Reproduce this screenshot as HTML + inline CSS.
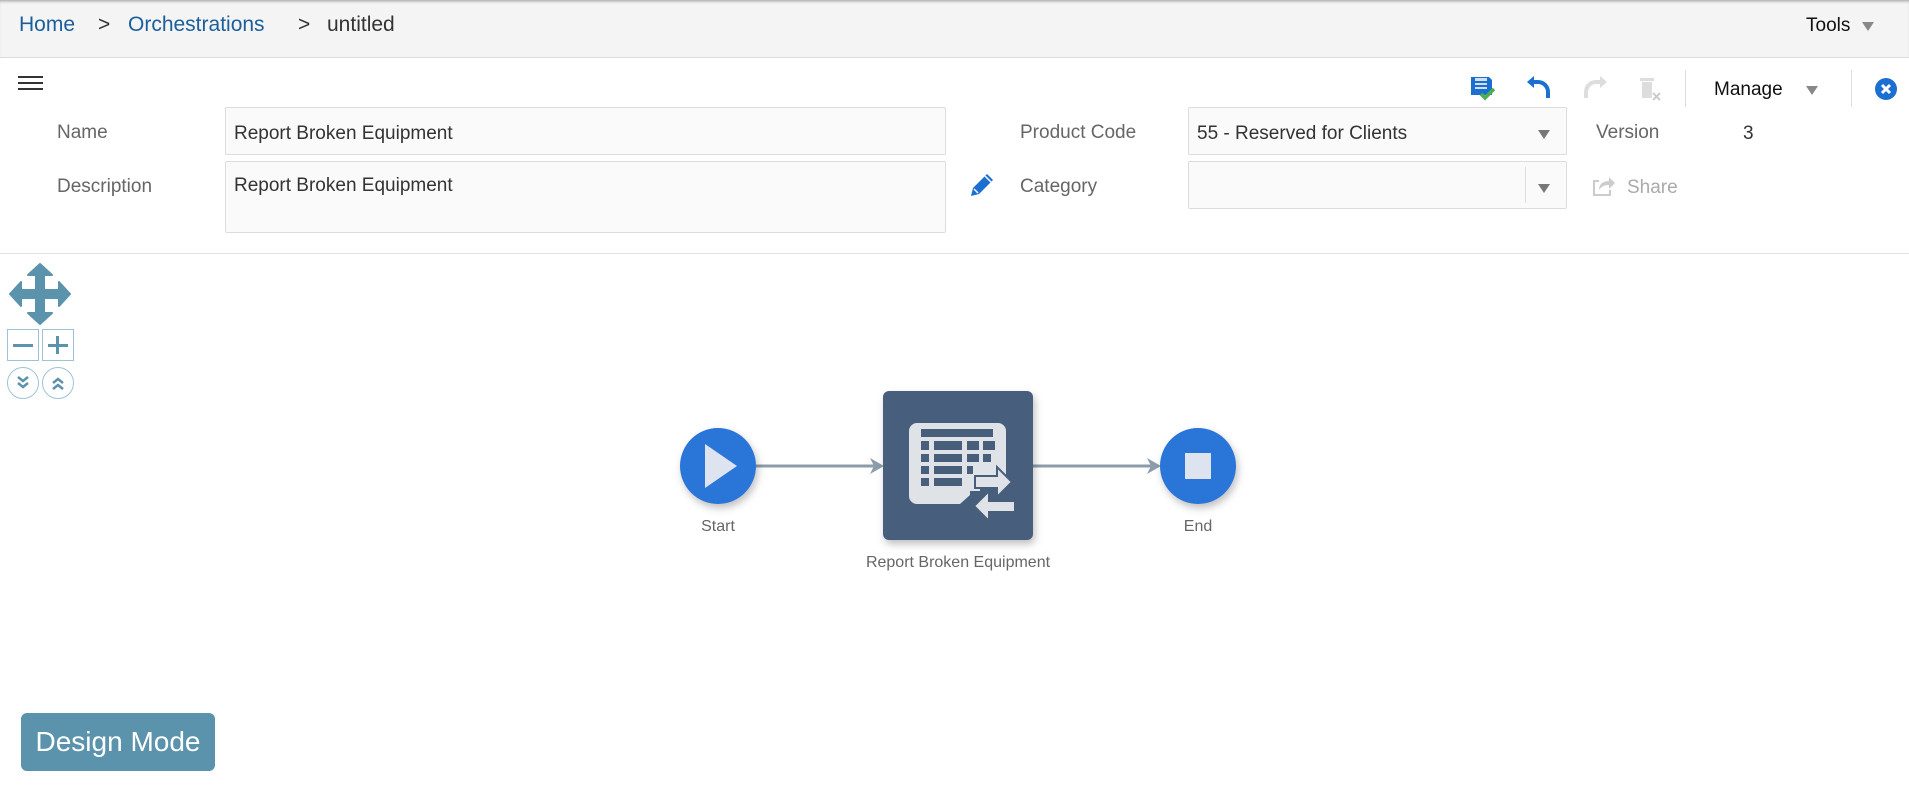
<!DOCTYPE html>
<html><head><meta charset="utf-8"><style>
*{margin:0;padding:0;box-sizing:border-box}
body{width:1909px;height:790px;background:#fff;font-family:"Liberation Sans",sans-serif;position:relative;overflow:hidden;color:#333}
.a{position:absolute}
.hdr{left:0;top:0;width:1909px;height:58px;background:#f4f4f4;border-bottom:1px solid #d8dde3;box-shadow:inset 0 3px 3px -2px #999}
.bc{top:13px;font-size:21px;color:#1a5e9c}
.lbl{font-size:19px;color:#666}
.inp{background:#fafafa;border:1px solid #ddd;border-radius:2px;font-size:19px;color:#333;padding:15px 8px 11px}
.tri{width:0;height:0;border-left:6px solid transparent;border-right:6px solid transparent;border-top:9px solid #777}
.zb{border:1px solid #9ec3d6;width:32px;height:32px}
.lab{font-size:16px;color:#666;text-align:center}
</style></head><body>
<div class="a hdr"></div>
<div class="a bc" style="left:19px">Home</div>
<div class="a bc" style="left:98px;color:#333">&gt;</div>
<div class="a bc" style="left:128px">Orchestrations</div>
<div class="a bc" style="left:298px;color:#333">&gt;</div>
<div class="a bc" style="left:327px;color:#333">untitled</div>
<div class="a" style="left:1806px;top:15px;font-size:19px;color:#111">Tools</div>
<div class="a tri" style="left:1862px;top:22px;border-top-color:#888"></div>

<div class="a" style="left:18px;top:76px;width:25px;height:2px;background:#333;box-shadow:0 6px 0 #333,0 12px 0 #333"></div>

<svg class="a" style="left:1468px;top:75px" width="30" height="28" viewBox="0 0 30 28"><path d="M3 2h18l3 3v15H3z" fill="#1b6fd0"/><rect x="7" y="3" width="12" height="3" fill="#cfe0f5"/><rect x="7" y="8" width="12" height="2" fill="#cfe0f5"/><rect x="7" y="12" width="12" height="2" fill="#cfe0f5"/><path d="M13 19l4 4 9-9" stroke="#4caf50" stroke-width="3.5" fill="none"/></svg>
<svg class="a" style="left:1526px;top:76px" width="28" height="26" viewBox="0 0 28 26"><path d="M8 3v5h4A8 8 0 0 1 20 16v6h4v-6A12 12 0 0 0 12 4H8V0L1 6l7 6z" fill="#1b6fd0"/></svg>
<svg class="a" style="left:1580px;top:76px" width="28" height="26" viewBox="0 0 28 26"><path d="M20 3v5h-4A8 8 0 0 0 8 16v6H4v-6A12 12 0 0 1 16 4h4V0l7 6-7 6z" fill="#ddd"/></svg>
<svg class="a" style="left:1638px;top:76px" width="26" height="28" viewBox="0 0 26 28"><rect x="2" y="2" width="14" height="3" fill="#ddd"/><rect x="4" y="6" width="10" height="16" fill="#ddd"/><path d="M15 17l7 7M22 17l-7 7" stroke="#ccc" stroke-width="2"/></svg>
<div class="a" style="left:1685px;top:70px;width:1px;height:37px;background:#ddd"></div>
<div class="a" style="left:1714px;top:79px;font-size:19px;color:#111">Manage</div>
<div class="a tri" style="left:1806px;top:86px;border-top-color:#888"></div>
<div class="a" style="left:1851px;top:70px;width:1px;height:37px;background:#ddd"></div>
<svg class="a" style="left:1874px;top:77px" width="24" height="24" viewBox="0 0 24 24"><circle cx="12" cy="12" r="11" fill="#1b6fd0"/><path d="M8 8l8 8M16 8l-8 8" stroke="#fff" stroke-width="3"/></svg>

<div class="a lbl" style="left:57px;top:122px">Name</div>
<div class="a inp" style="left:225px;top:107px;width:721px;height:48px">Report Broken Equipment</div>
<div class="a lbl" style="left:57px;top:176px">Description</div>
<div class="a inp" style="left:225px;top:161px;width:721px;height:72px;padding-top:13px">Report Broken Equipment</div>
<svg class="a" style="left:967px;top:170px" width="30" height="30" viewBox="0 0 30 30"><path d="M4 26l2-8L20 4l6 6L12 24z" fill="#1b6fd0"/><path d="M7 19l4 4M18 6l6 6" stroke="#fff" stroke-width="1.5"/></svg>
<div class="a lbl" style="left:1020px;top:122px">Product Code</div>
<div class="a inp" style="left:1188px;top:107px;width:379px;height:48px">55 - Reserved for Clients</div>
<div class="a tri" style="left:1538px;top:130px"></div>
<div class="a lbl" style="left:1596px;top:122px">Version</div>
<div class="a" style="left:1743px;top:123px;font-size:19px;color:#333">3</div>
<div class="a lbl" style="left:1020px;top:176px">Category</div>
<div class="a inp" style="left:1188px;top:161px;width:379px;height:48px"></div>
<div class="a" style="left:1525px;top:167px;width:1px;height:36px;background:#ddd"></div>
<div class="a tri" style="left:1538px;top:184px"></div>
<svg class="a" style="left:1591px;top:174px" width="26" height="24" viewBox="0 0 26 24"><path d="M2 6h6v2H4v12h14v-4h2v6H2z" fill="#ccc"/><path d="M8 16c0-6 4-9 10-9V3l6 6-6 6v-4c-5 0-8 2-10 5z" fill="#ccc"/></svg>
<div class="a" style="left:1627px;top:177px;font-size:19px;color:#aaa">Share</div>
<div class="a" style="left:0;top:253px;width:1909px;height:1px;background:#e2e2e2"></div>

<svg class="a" style="left:8px;top:262px" width="64" height="64" viewBox="0 0 64 64"><path d="M32 2l12 11h-8v15h15v-8l11 12-11 12v-8H36v15h8L32 62 20 51h8V36H13v8L2 32l11-12v8h15V13h-8z" fill="#5b93ad" stroke="#5b93ad" stroke-width="2" stroke-linejoin="round"/></svg>
<div class="a zb" style="left:7px;top:329px"></div>
<div class="a" style="left:13px;top:344px;width:20px;height:3px;background:#5b93ad"></div>
<div class="a zb" style="left:42px;top:329px"></div>
<div class="a" style="left:48px;top:344px;width:20px;height:3px;background:#5b93ad"></div>
<div class="a" style="left:56px;top:336px;width:3px;height:18px;background:#5b93ad"></div>
<svg class="a" style="left:7px;top:366px" width="70" height="34" viewBox="0 0 70 34"><circle cx="16" cy="17" r="15.5" fill="none" stroke="#9ec3d6"/><circle cx="51" cy="17" r="15.5" fill="none" stroke="#9ec3d6"/><path d="M11 11l5 4 5-4M11 17l5 4 5-4" stroke="#5b93ad" stroke-width="2.5" fill="none"/><path d="M46 17l5-4 5 4M46 23l5-4 5 4" stroke="#5b93ad" stroke-width="2.5" fill="none"/></svg>

<svg class="a" style="left:660px;top:380px" width="600" height="180" viewBox="660 380 600 180">
<defs><filter id="sh" x="-30%" y="-30%" width="160%" height="160%"><feDropShadow dx="2" dy="4" stdDeviation="4" flood-color="#000" flood-opacity="0.25"/></filter></defs>
<line x1="756" y1="466" x2="875" y2="466" stroke="#8d9cab" stroke-width="3"/>
<path d="M870 458l14 8-14 8 4-8z" fill="#8d9cab"/>
<line x1="1033" y1="466" x2="1152" y2="466" stroke="#8d9cab" stroke-width="3"/>
<path d="M1147 458l14 8-14 8 4-8z" fill="#8d9cab"/>
<circle cx="718" cy="466" r="38" fill="#2b74d8" filter="url(#sh)"/>
<path d="M705 444l32 22-32 22z" fill="#dde4f0"/>
<circle cx="1198" cy="466" r="38" fill="#2b74d8" filter="url(#sh)"/>
<rect x="1185" y="453" width="26" height="26" fill="#dde4f0"/>
<rect x="883" y="391" width="150" height="149" rx="6" fill="#475f7b" filter="url(#sh)"/>
<g transform="translate(883 391)">
<path d="M34 32h81a8 8 0 0 1 8 8v50h-26v10h-10v4l-10 9H34a8 8 0 0 1-8-8V40a8 8 0 0 1 8-8z" fill="#dfe3e8"/>
<rect x="38" y="38" width="72" height="8" fill="#475f7b"/>
<g fill="#475f7b"><rect x="38" y="50" width="8" height="9"/><rect x="51" y="50" width="28" height="9"/><rect x="84" y="50" width="12" height="9"/><rect x="100" y="50" width="12" height="9"/>
<rect x="38" y="63" width="8" height="8"/><rect x="51" y="63" width="28" height="8"/><rect x="84" y="63" width="12" height="8"/><rect x="100" y="63" width="8" height="8"/>
<rect x="38" y="75" width="8" height="8"/><rect x="51" y="75" width="28" height="8"/><rect x="84" y="75" width="6" height="8"/>
<rect x="38" y="87" width="8" height="8"/><rect x="51" y="87" width="28" height="8"/></g>
<path d="M92 85h22v-9l15 15-15 15v-9H92z" fill="#dfe3e8" stroke="#475f7b" stroke-width="2"/>
<path d="M132 110h-26v-10L91 115l15 15v-9h26z" fill="#dfe3e8" stroke="#475f7b" stroke-width="2"/>
</g>
</svg>
<div class="a lab" style="left:678px;top:518px;width:80px">Start</div>
<div class="a lab" style="left:1158px;top:518px;width:80px">End</div>
<div class="a lab" style="left:808px;top:554px;width:300px">Report Broken Equipment</div>

<div class="a" style="left:21px;top:713px;width:194px;height:58px;background:#5b93ad;border-radius:6px;color:#fff;font-size:28px;line-height:58px;text-align:center">Design Mode</div>
</body></html>
